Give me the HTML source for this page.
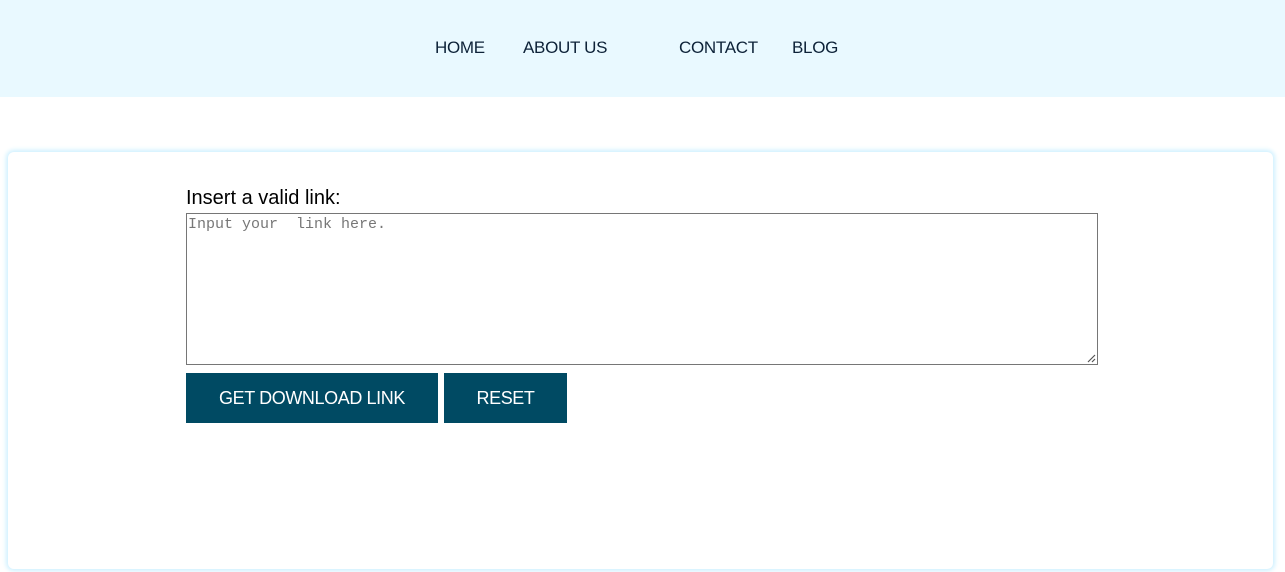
<!DOCTYPE html>
<html><head><style>
*{margin:0;padding:0;box-sizing:border-box}
body{width:1285px;height:572px;background:#fff;font-family:"Liberation Sans",sans-serif;position:relative;overflow:hidden}
.nav{position:absolute;left:0;top:0;width:1285px;height:97px;background:#e9f9ff}
.nav span{position:absolute;top:38px;font-size:17px;color:#0d2238;font-family:"Liberation Sans",sans-serif;font-weight:normal;letter-spacing:-0.3px}
.card{position:absolute;left:8px;top:152px;width:1265px;height:417px;background:#fff;border-radius:6px;box-shadow:0 0 5px 2px #cdf0ff}
label{position:absolute;left:186px;top:187px;font-size:20px;color:#000}
.ta{position:absolute;left:186px;top:213px;width:912px;height:152px;border:1px solid #767676;font-family:"Liberation Mono",monospace;font-size:15px;color:#777;padding:2px 1px}
.btn{position:absolute;top:373px;height:50px;background:#004a63;color:#fff;font-size:18px;display:flex;align-items:center;justify-content:center;letter-spacing:-0.4px}
</style></head><body>
<div class="nav">
<span style="left:435px">HOME</span>
<span style="left:523px">ABOUT US</span>
<span style="left:679px">CONTACT</span>
<span style="left:792px">BLOG</span>
</div>
<div class="card"></div>
<label>Insert a valid link:</label>
<div class="ta">Input your&nbsp; link here.
<svg style="position:absolute;right:1px;bottom:1px" width="10" height="10"><path d="M9 2L2 9M9 6L6 9" stroke="#555" stroke-width="1.2"/></svg></div>
<div class="btn" style="left:186px;width:252px">GET DOWNLOAD LINK</div>
<div class="btn" style="left:444px;width:123px">RESET</div>
</body></html>
